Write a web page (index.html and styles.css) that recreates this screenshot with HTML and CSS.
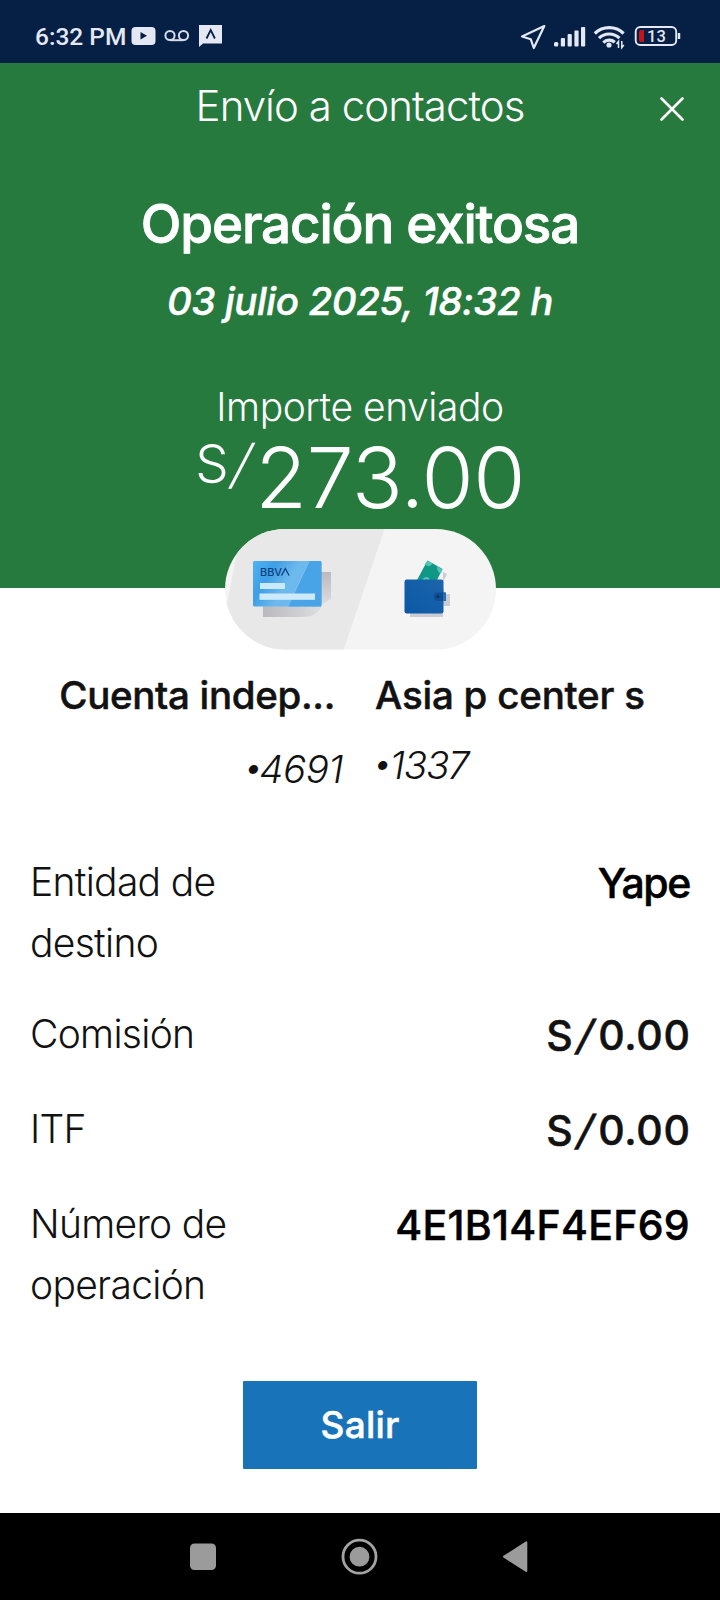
FILE: index.html
```html
<!DOCTYPE html>
<html lang="es">
<head>
<meta charset="utf-8">
<title>Envío a contactos</title>
<link rel="stylesheet" href="styles.css">
</head>
<body>
<div class="screen">
  <div class="status">
    <span class="clock">6:32 PM</span>
    <svg class="status-left" width="92" height="24" viewBox="131 24 92 24" fill="none">
      <rect x="131.500" y="27" width="24" height="18" rx="4" fill="#e4e8f3"/>
      <path d="M140.500 32v7.500l6.500-3.750z" fill="#061f44"/>
      <g stroke="#d5dbe9" stroke-width="2"><circle cx="170" cy="35.500" r="4.600"/><circle cx="183.500" cy="35.500" r="4.600"/><path d="M170 40.200h13.500"/></g>
      <path d="M199 25h23v18.500h-19l-4 3.500z" fill="#e4e8f3"/>
      <path d="M206.500 38.500l4.200-8.500 4.200 8.500" stroke="#061f44" stroke-width="1.800"/>
    </svg>
    <svg class="status-right" width="162" height="28" viewBox="520 22 162 28" fill="none">
      <path d="M544.300 26L522 36.500l8.800 2.800 3 8.700z" stroke="#e4e8f3" stroke-width="2.200" stroke-linejoin="round"/>
      <g fill="#e4e8f3"><rect x="554" y="42" width="4.300" height="4.500" rx="1.500"/><rect x="560.800" y="38" width="4.200" height="8.500" rx="1"/><rect x="567.600" y="34" width="4.200" height="12.500" rx="1"/><rect x="574.400" y="30.500" width="4.200" height="16" rx="1"/><rect x="581" y="27" width="4.200" height="19.500" rx="1"/></g>
      <g stroke="#e4e8f3" stroke-width="3.200"><path d="M594.800 33.500a20.500 20.500 0 0 1 28.800 0"/><path d="M599 38.200a14.500 14.500 0 0 1 20.400 0"/><path d="M603.300 42.600a8.500 8.500 0 0 1 11.500-.3"/></g>
      <circle cx="609" cy="45" r="2.600" fill="#e4e8f3"/>
      <path d="M618.500 48v-6.500l-2 2.500M621.800 41v6.500l2-2.500" stroke="#e4e8f3" stroke-width="1.500"/>
      <rect x="635.700" y="27" width="40.500" height="18" rx="4.500" stroke="#e4e8f3" stroke-width="1.900"/>
      <path d="M679 33v6" stroke="#e4e8f3" stroke-width="2.500"/>
      <path d="M644 30v12h-3q-2 0-2-2v-8q0-2 2-2z" fill="#c4141e"/>
      <text x="647" y="42" class="battery">13</text>
    </svg>
  </div>
  <header class="hero">
    <div class="bar"><h1 class="title">Envío a contactos</h1>
      <svg class="close" width="26" height="26" viewBox="0 0 26 26"><path d="M2.500 2.500l21 21M23.500 2.500l-21 21" stroke="#fff" stroke-width="2.600" stroke-linecap="round"/></svg>
    </div>
    <h2 class="success">Operación exitosa</h2>
    <p class="date">03 julio 2025, 18:32 h</p>
    <p class="caption">Importe enviado</p>
    <p class="amount"><span class="currency">S<span class="slash">/</span></span><span class="figure">273.00</span></p>
    <div class="pill">
      <svg width="271" height="121" viewBox="225 529 271 121">
        <defs>
          <clipPath id="pillShape"><rect x="225" y="529" width="271" height="120.500" rx="60.250"/></clipPath>
          <linearGradient id="card" x1="0" y1="0" x2="1" y2=".4"><stop offset="0" stop-color="#50b4f5"/><stop offset=".3" stop-color="#3f9ee5"/><stop offset=".6" stop-color="#6db9ee"/><stop offset="1" stop-color="#6db9ee"/></linearGradient>
          <linearGradient id="shade" x1="0" y1="0" x2="1" y2="0"><stop offset="0" stop-color="#b8b8be"/><stop offset="1" stop-color="#dedee0"/></linearGradient>
          <linearGradient id="side" x1="0" y1="0" x2="0" y2="1"><stop offset="0" stop-color="#b9b9bf"/><stop offset="1" stop-color="#dedee1"/></linearGradient>
          <linearGradient id="wallet" x1="0" y1="1" x2="1" y2="0"><stop offset="0" stop-color="#0a58a5"/><stop offset="1" stop-color="#1d65ab"/></linearGradient>
        </defs>
        <g clip-path="url(#pillShape)">
          <rect x="225" y="529" width="271" height="121" fill="#f4f4f4"/>
          <path d="M241.500 529H384.500L343.500 650H218z" fill="#e8e8e8"/>
        </g>
        <path d="M321 572h10v27l-10 6z" fill="url(#side)"/>
        <path d="M263 606h58v2q-6 9-18 9h-40z" fill="url(#shade)"/>
        <rect x="253" y="561" width="68.500" height="45.500" rx="1.500" fill="url(#card)"/>
        <path d="M309 561h11q1.500 0 1.500 1.500v42.500q0 1.500-1.500 1.500h-32z" fill="#48a4e7"/>
        <path d="M309 561.500L288 606" stroke="#7bc1f2" stroke-width="1"/>
        <rect x="260" y="583" width="25" height="6" fill="#c9e9fd"/><rect x="259.500" y="593.500" width="55.500" height="6.300" fill="#cdeafd"/>
        <text x="260" y="575.500" class="bank" textLength="22" lengthAdjust="spacingAndGlyphs">BBV</text>
        <path d="M281.500 575.500l3.800-7 3.800 7" fill="none" stroke="#0a3f7c" stroke-width="1.300"/>
        <path d="M443 572l4 2-5 10 3 10h5v12h-7v11h-33v-4l33-6z" fill="#ccccd3"/>
        <path d="M427.500 560.500l15 8.500-7 14-19-2z" fill="#109887"/>
        <path d="M424.500 564.500l3-4 5 3q-2 3-4.500 2.500zM437 566.500l5.500 3-1.500 4q-4-1-4-7zM422 580q3-5 7-2l1 3z" fill="#55c4b5"/>
        <rect x="404.500" y="579.500" width="39" height="34" rx="2.200" fill="url(#wallet)"/>
        <path d="M438 592.500h7.500v8.500h-7.500a4.250 4.250 0 0 1 0-8.500z" fill="#0d4e93"/>
        <rect x="443" y="592.500" width="3" height="8.500" fill="#2370b7"/><circle cx="437.800" cy="596.500" r="1.600" fill="#16345f"/>
      </svg>
    </div>
  </header>
  <main class="content">
    <section class="parties">
      <div class="from"><p class="name">Cuenta indep...</p><p class="number"><span class="dot">•</span>4691</p></div>
      <div class="to"><p class="name">Asia p center s</p><p class="number"><span class="dot">•</span>1337</p></div>
    </section>
    <dl class="details">
      <div class="row"><dt>Entidad de<br>destino</dt><dd class="bank-name">Yape</dd></div>
      <div class="row"><dt>Comisión</dt><dd class="money">S<span class="slash">/</span>0.00</dd></div>
      <div class="row"><dt>ITF</dt><dd class="money">S<span class="slash">/</span>0.00</dd></div>
      <div class="row"><dt>Número de<br>operación</dt><dd class="code">4E1B14F4EF69</dd></div>
    </dl>
    <button class="exit">Salir</button>
  </main>
  <nav class="nav">
    <svg width="720" height="87" viewBox="0 1513 720 87">
      <rect x="190" y="1543.500" width="26" height="26.500" rx="4.500" fill="#9b9b9b"/>
      <circle cx="359.500" cy="1556.700" r="16.500" fill="none" stroke="#a3a3a3" stroke-width="2.800"/><circle cx="359.500" cy="1556.700" r="9.900" fill="#9b9b9b"/>
      <path d="M504 1556.700L526.300 1542.300V1571z" fill="#9b9b9b" stroke="#9b9b9b" stroke-width="2" stroke-linejoin="round"/>
    </svg>
  </nav>
</div>
</body>
</html>
```
FILE: styles.css
```css
* { box-sizing: border-box; margin: 0; padding: 0; }
body { width: 720px; background: #fff; font-family: Inter, "Open Sans", sans-serif; color: #121212; }
.screen { width: 720px; height: 1600px; display: flex; flex-direction: column; overflow: hidden; white-space: nowrap; }
.status { height: 63px; flex: none; background: #061f44; display: flex; align-items: flex-start; padding: 0 38px 0 35px; }
.clock { width: 96px; font: 500 24.500px/30px Roboto, sans-serif; color: #e4e8f3; padding-top: 22px; }
.status-left { margin-top: 24px; }
.status-right { margin: 22px 0 0 auto; }
.battery { font: 500 16.500px Roboto, sans-serif; fill: #e4e8f3; }
.hero { height: 525px; flex: none; background: #277a3e; color: #fff; text-align: center; display: flex; flex-direction: column; }
.bar { padding-top: 12px; display: grid; grid-template-columns: 96px 1fr 96px; height: 73px; }
.title { grid-column: 2; font-size: 42px; line-height: 61px; font-weight: 300; letter-spacing: -.950px; }
.close { margin: 21px 0 0 35px; }
.success, .date, .name, dd, .exit { -webkit-text-stroke: .500px currentColor; }
.success { margin-top: 53px; font-size: 53px; line-height: 70px; font-weight: 500; letter-spacing: -1.150px; -webkit-text-stroke-width: .800px; }
.date { margin-top: 17px; font-size: 38.500px; line-height: 50px; font-weight: 500; font-style: italic; letter-spacing: -.400px; }
.caption { margin-top: 60px; font-size: 39px; line-height: 42px; font-weight: 300; letter-spacing: -.450px; }
.amount { height: 90px; display: flex; justify-content: center; align-items: flex-start; font-weight: 300; margin-top: 4px; }
.currency { font-size: 53px; line-height: 50px; margin-top: 7px; }
.slash { display: inline-block; transform: skewX(-14deg); margin: 0 4px; }
.figure { font-size: 84.500px; line-height: 90px; letter-spacing: -.600px; }
.pill { flex: none; margin: 7px 0 0 225px; width: 271px; height: 121px; }
.pill svg { display: block; }
.bank { font: 500 10px Inter, sans-serif; fill: #0a3f7c; }
.content { flex: 1; padding-top: 82px; }
.parties { display: grid; grid-template-columns: 343px 1fr; column-gap: 33px; font-size: 38.500px; line-height: 50px; height: 180.700px; }
.from { text-align: right; }
.from .name { padding-right: 8px; }
.name { font-weight: 500; letter-spacing: -.330px; }
.to .name { letter-spacing: -.220px; margin-left: -1px; }
.number { height: 50px; margin-top: 20px; font-weight: 300; font-style: italic; letter-spacing: -1.300px; }
.from .number { margin-top: 24px; letter-spacing: -.500px; }
.dot { font-size: 34px; font-weight: 300; margin: 0 -3px 0 0; vertical-align: 4px; line-height: 1; }
.to .dot { margin: 0 -1px 0 -3px; }
.details { display: flex; flex-direction: column; gap: 29.700px; padding: 0 30px; }
.row { display: flex; justify-content: space-between; min-height: 65.300px; }
dt { font-size: 39px; line-height: 61.300px; font-weight: 300; letter-spacing: -.700px; }
dd { font-size: 41px; line-height: 65px; font-weight: 500; }
.bank-name { color: #000; letter-spacing: -1.400px; }
.code { color: #000; letter-spacing: .300px; }
.money { letter-spacing: .700px; margin-right: -.700px; }
.money .slash { margin: 0 4.500px; }
.exit { display: block; width: 234px; height: 88px; margin: 65.300px auto 0 243px; border: 0; border-radius: 1px; background: #1973b8; color: #fff; font: 500 37px/50px Inter, sans-serif; letter-spacing: .200px; }
.nav { height: 87px; flex: none; background: #000; }
.nav svg { display: block; }
```
